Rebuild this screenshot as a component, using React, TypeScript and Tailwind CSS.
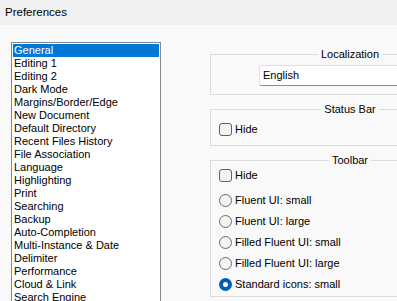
const pages = [
  "General",
  "Editing 1",
  "Editing 2",
  "Dark Mode",
  "Margins/Border/Edge",
  "New Document",
  "Default Directory",
  "Recent Files History",
  "File Association",
  "Language",
  "Highlighting",
  "Print",
  "Searching",
  "Backup",
  "Auto-Completion",
  "Multi-Instance & Date",
  "Delimiter",
  "Performance",
  "Cloud & Link",
  "Search Engine",
];

const toolbarStyles = [
  "Fluent UI: small",
  "Fluent UI: large",
  "Filled Fluent UI: small",
  "Filled Fluent UI: large",
  "Standard icons: small",
];

function Group({ title, className, children }: { title: string; className?: string; children: React.ReactNode }) {
  return (
    <fieldset className={`w-[280px] shrink-0 border border-[#dcdcdc] ${className ?? ""}`}>
      <legend className="mx-auto px-[3px] leading-4">{title}</legend>
      {children}
    </fieldset>
  );
}

function CheckBox({ label, className }: { label: string; className?: string }) {
  return (
    <div className={`flex h-4 items-center pl-2 ${className ?? ""}`}>
      <span className="size-[13px] rounded-[3px] border border-[#5f5f5f] bg-[#f3f3f3]" />
      <span className="ml-[3px]">{label}</span>
    </div>
  );
}

function Radio({ label, checked }: { label: string; checked?: boolean }) {
  return (
    <div className="flex h-[21px] items-center pl-2">
      {checked ? (
        <span className="flex size-[13px] items-center justify-center rounded-full bg-[#005fb8]">
          <span className="size-[5px] rounded-full bg-white" />
        </span>
      ) : (
        <span className="size-[13px] rounded-full border border-[#6a6a6a] bg-[#f3f3f3]" />
      )}
      <span className="ml-[3px]">{label}</span>
    </div>
  );
}

export default function App() {
  const selected = 0;

  return (
    <div className="flex h-[301px] w-[397px] flex-col overflow-hidden bg-[#f9f9f9] font-['Liberation_Sans',Arial,sans-serif] text-[11px] text-black">
      <div className="flex h-[25px] shrink-0 items-center bg-[#f0f0f0] px-[5px] text-[11.5px]">Preferences</div>

      <div className="flex flex-1 items-start">
        <div className="ml-[11px] mt-[17px] h-[300px] w-[150px] shrink-0 border border-[#828790] bg-white p-px">
          {pages.map((p, i) => (
            <div
              key={p}
              className={`h-[13px] pl-[1px] leading-[13px] whitespace-nowrap ${i === selected ? "bg-[#0078d7] text-white" : ""}`}
            >
              {p}
            </div>
          ))}
        </div>

        <div className="ml-[49px] mt-[21px] flex flex-col">
          <Group title="Localization" className="pb-[8px]">
            <div className="ml-[48px] mt-[3px] flex h-[21px] w-[200px] items-center rounded-[2px] border border-[#e0e0e0] border-b-[#8f8f8f] bg-white pl-[3px]">
              English
            </div>
          </Group>

          <Group title="Status Bar" className="mt-[6px] pb-[8px]">
            <CheckBox label="Hide" className="mt-[4px]" />
          </Group>

          <Group title="Toolbar" className="mt-[6px] pb-px">
            <CheckBox label="Hide" className="-mt-[1px]" />
            <div className="mt-[7px] flex flex-col">
              {toolbarStyles.map((s, i) => (
                <Radio key={s} label={s} checked={i === toolbarStyles.length - 1} />
              ))}
            </div>
          </Group>
        </div>
      </div>
    </div>
  );
}
